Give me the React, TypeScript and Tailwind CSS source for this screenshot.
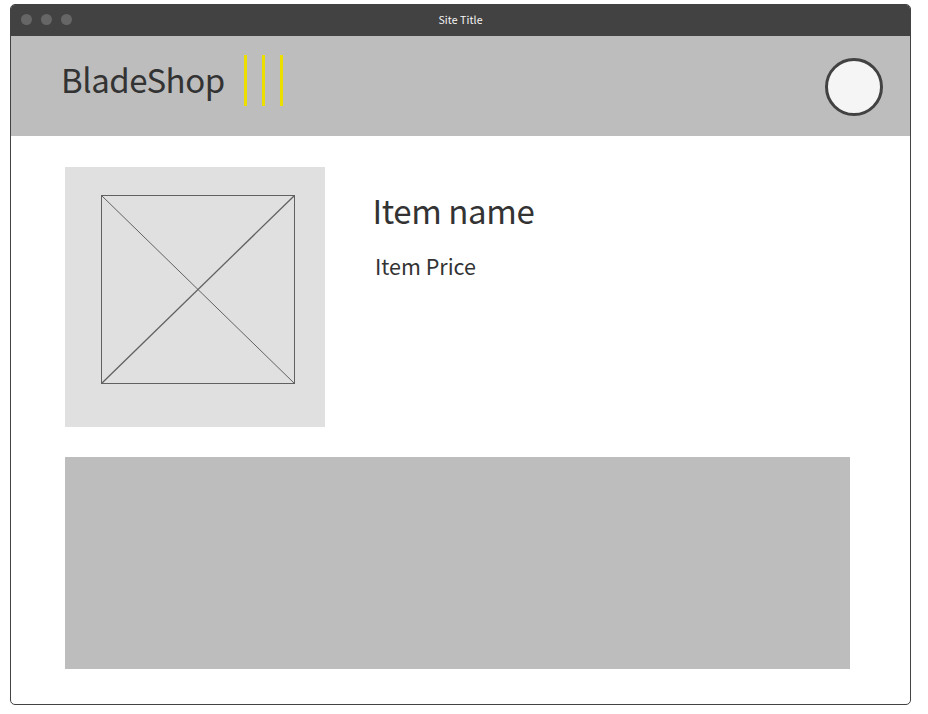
function TitleBar() {
  return (
    <div className="grid h-[31px] grid-cols-[1fr_auto_1fr] items-center bg-[#424242]">
      <div className="flex gap-[9px] pb-[3px] pl-[10px]">
        <span className="size-[11px] rounded-full bg-[#666666]" />
        <span className="size-[11px] rounded-full bg-[#666666]" />
        <span className="size-[11px] rounded-full bg-[#666666]" />
      </div>
      <span className="pb-[2px] text-[10.5px] leading-[16px] tracking-[0.12px] text-[#f5f5f5]">Site Title</span>
    </div>
  );
}

function Header() {
  return (
    <header className="flex h-[100px] items-start bg-[#bdbdbd] pl-[50px] pr-[27px]">
      <h1 className="mt-[23px] w-[183px] text-[33px] leading-[40px] tracking-[-0.45px]">BladeShop</h1>
      <div className="mt-[19px] flex gap-[15px]">
        <span className="h-[51px] w-[3px] bg-[#ecdf00]" />
        <span className="h-[51px] w-[3px] bg-[#ecdf00]" />
        <span className="h-[51px] w-[3px] bg-[#ecdf00]" />
      </div>
      <div className="ml-auto mt-[22px] size-[58px] rounded-full border-[3px] border-[#424242] bg-[#f5f5f5]" />
    </header>
  );
}

function ImagePlaceholder() {
  return (
    <div className="size-[260px] bg-[#e0e0e0] pl-[36px] pt-[28px]">
      <svg width="194" height="189" viewBox="0 0 194 189" fill="none" stroke="#616161" strokeWidth="1">
        <rect x="0.5" y="0.5" width="193" height="188" />
        <path d="M0.5 0.5L193.5 188.5" />
        <path d="M193.5 0.5L0.5 188.5" strokeWidth="1.3" />
      </svg>
    </div>
  );
}

export default function App() {
  return (
    <div className="h-[714px] w-[928px] bg-white pl-[10px] pt-[4px] font-['Noto_Sans_CJK_SC',sans-serif] text-[#333333]">
      <div className="h-[701px] w-[901px] overflow-hidden rounded-[5px] border border-[#424242] bg-white">
        <TitleBar />
        <Header />
        <main className="pl-[54px] pt-[31px]">
          <div className="flex">
            <ImagePlaceholder />
            <div className="pl-[47.5px] pt-[23px]">
              <h2 className="text-[33px] leading-[40px] tracking-[-0.4px]">Item name</h2>
              <p className="ml-[2.5px] mt-[21px] text-[21.5px] leading-[30px]">Item Price</p>
            </div>
          </div>
          <div className="mt-[30px] h-[212px] w-[785px] bg-[#bdbdbd]" />
        </main>
      </div>
    </div>
  );
}
